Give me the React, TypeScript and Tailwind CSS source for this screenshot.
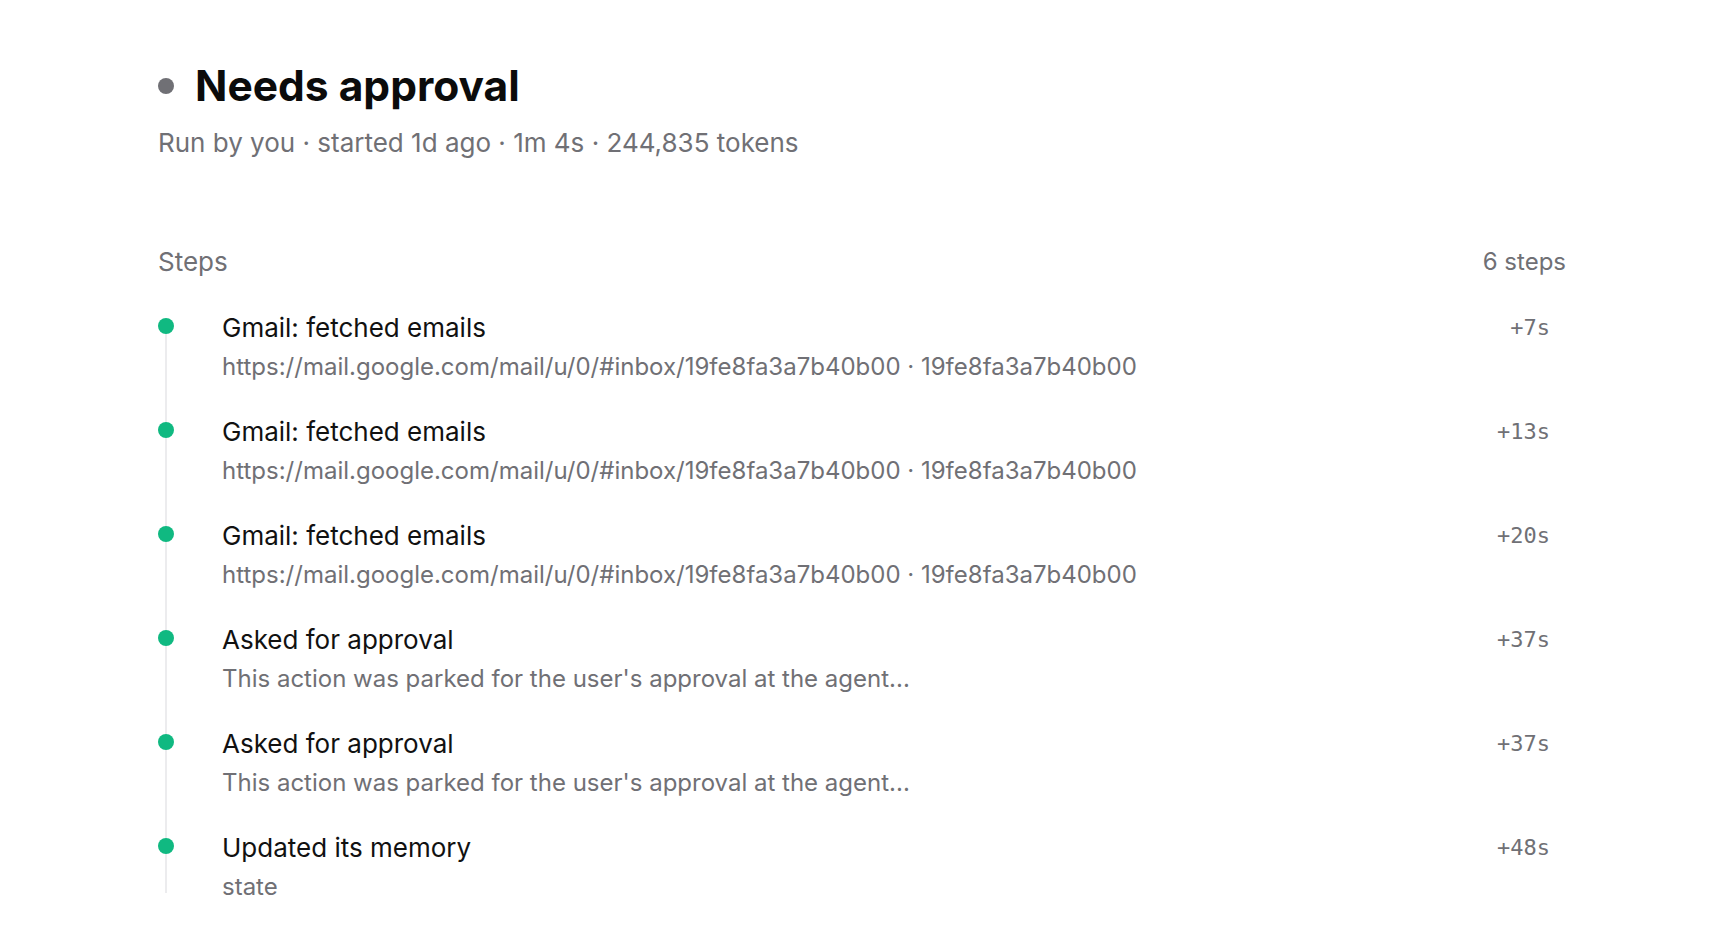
import React from "react";

// Run detail — header + step timeline

type Step = {
  title: string;
  detail: string;
  offset: string;
};

const url = "https://mail.google.com/mail/u/0/#inbox/19fe8fa3a7b40b00 · 19fe8fa3a7b40b00";
const parked = "This action was parked for the user's approval at the agent...";

const steps: Step[] = [
  { title: "Gmail: fetched emails", detail: url, offset: "+7s" },
  { title: "Gmail: fetched emails", detail: url, offset: "+13s" },
  { title: "Gmail: fetched emails", detail: url, offset: "+20s" },
  { title: "Asked for approval", detail: parked, offset: "+37s" },
  { title: "Asked for approval", detail: parked, offset: "+37s" },
  { title: "Updated its memory", detail: "state", offset: "+48s" },
];

function StepRow({ step, last }: { step: Step; last: boolean }) {
  return (
    <div className={`flex items-start ${last ? "" : "pb-[33px]"}`}>
      {/* dot sits on the timeline rail */}
      <div className="w-[64px] shrink-0 pt-[6px]">
        <span className="relative z-10 block h-[16px] w-[16px] rounded-full bg-[#10b981]" />
      </div>
      <div className="min-w-0 flex-1">
        <p className="text-[26px] leading-[32px] text-[#111111]">{step.title}</p>
        <p className="mt-[7px] text-[24px] leading-[32px] text-[#707075]">{step.detail}</p>
      </div>
      <span className="pr-[16px] font-['DejaVu_Sans_Mono',monospace] text-[22px] leading-[32px] text-[#707075]">
        {step.offset}
      </span>
    </div>
  );
}

export default function App() {
  return (
    <div className="min-h-screen bg-white font-['Inter',sans-serif]">
      <div className="mx-auto w-[1408px] pt-[62px]">
        {/* Header */}
        <div className="flex items-center gap-[21px]">
          <span className="h-[16px] w-[16px] rounded-full bg-[#707075]" />
          <h1 className="text-[42.5px] font-bold leading-[48px] text-[#0b0b0b]">Needs approval</h1>
        </div>
        <p className="mt-[16.5px] text-[26px] leading-[32px] text-[#707075]">
          Run by you · started 1d ago · 1m 4s · 244,835 tokens
        </p>

        {/* Steps */}
        <div className="mt-[87.5px] flex items-center justify-between leading-[32px] text-[#707075]">
          <span className="text-[26px]">Steps</span>
          <span className="text-[24px]">6 steps</span>
        </div>

        <div className="relative mt-[34px]">
          <div className="absolute bottom-[10px] left-[7px] top-[14px] w-[2px] bg-[#ececee]" />
          {steps.map((s, i) => (
            <StepRow key={i} step={s} last={i === steps.length - 1} />
          ))}
        </div>
      </div>
    </div>
  );
}
